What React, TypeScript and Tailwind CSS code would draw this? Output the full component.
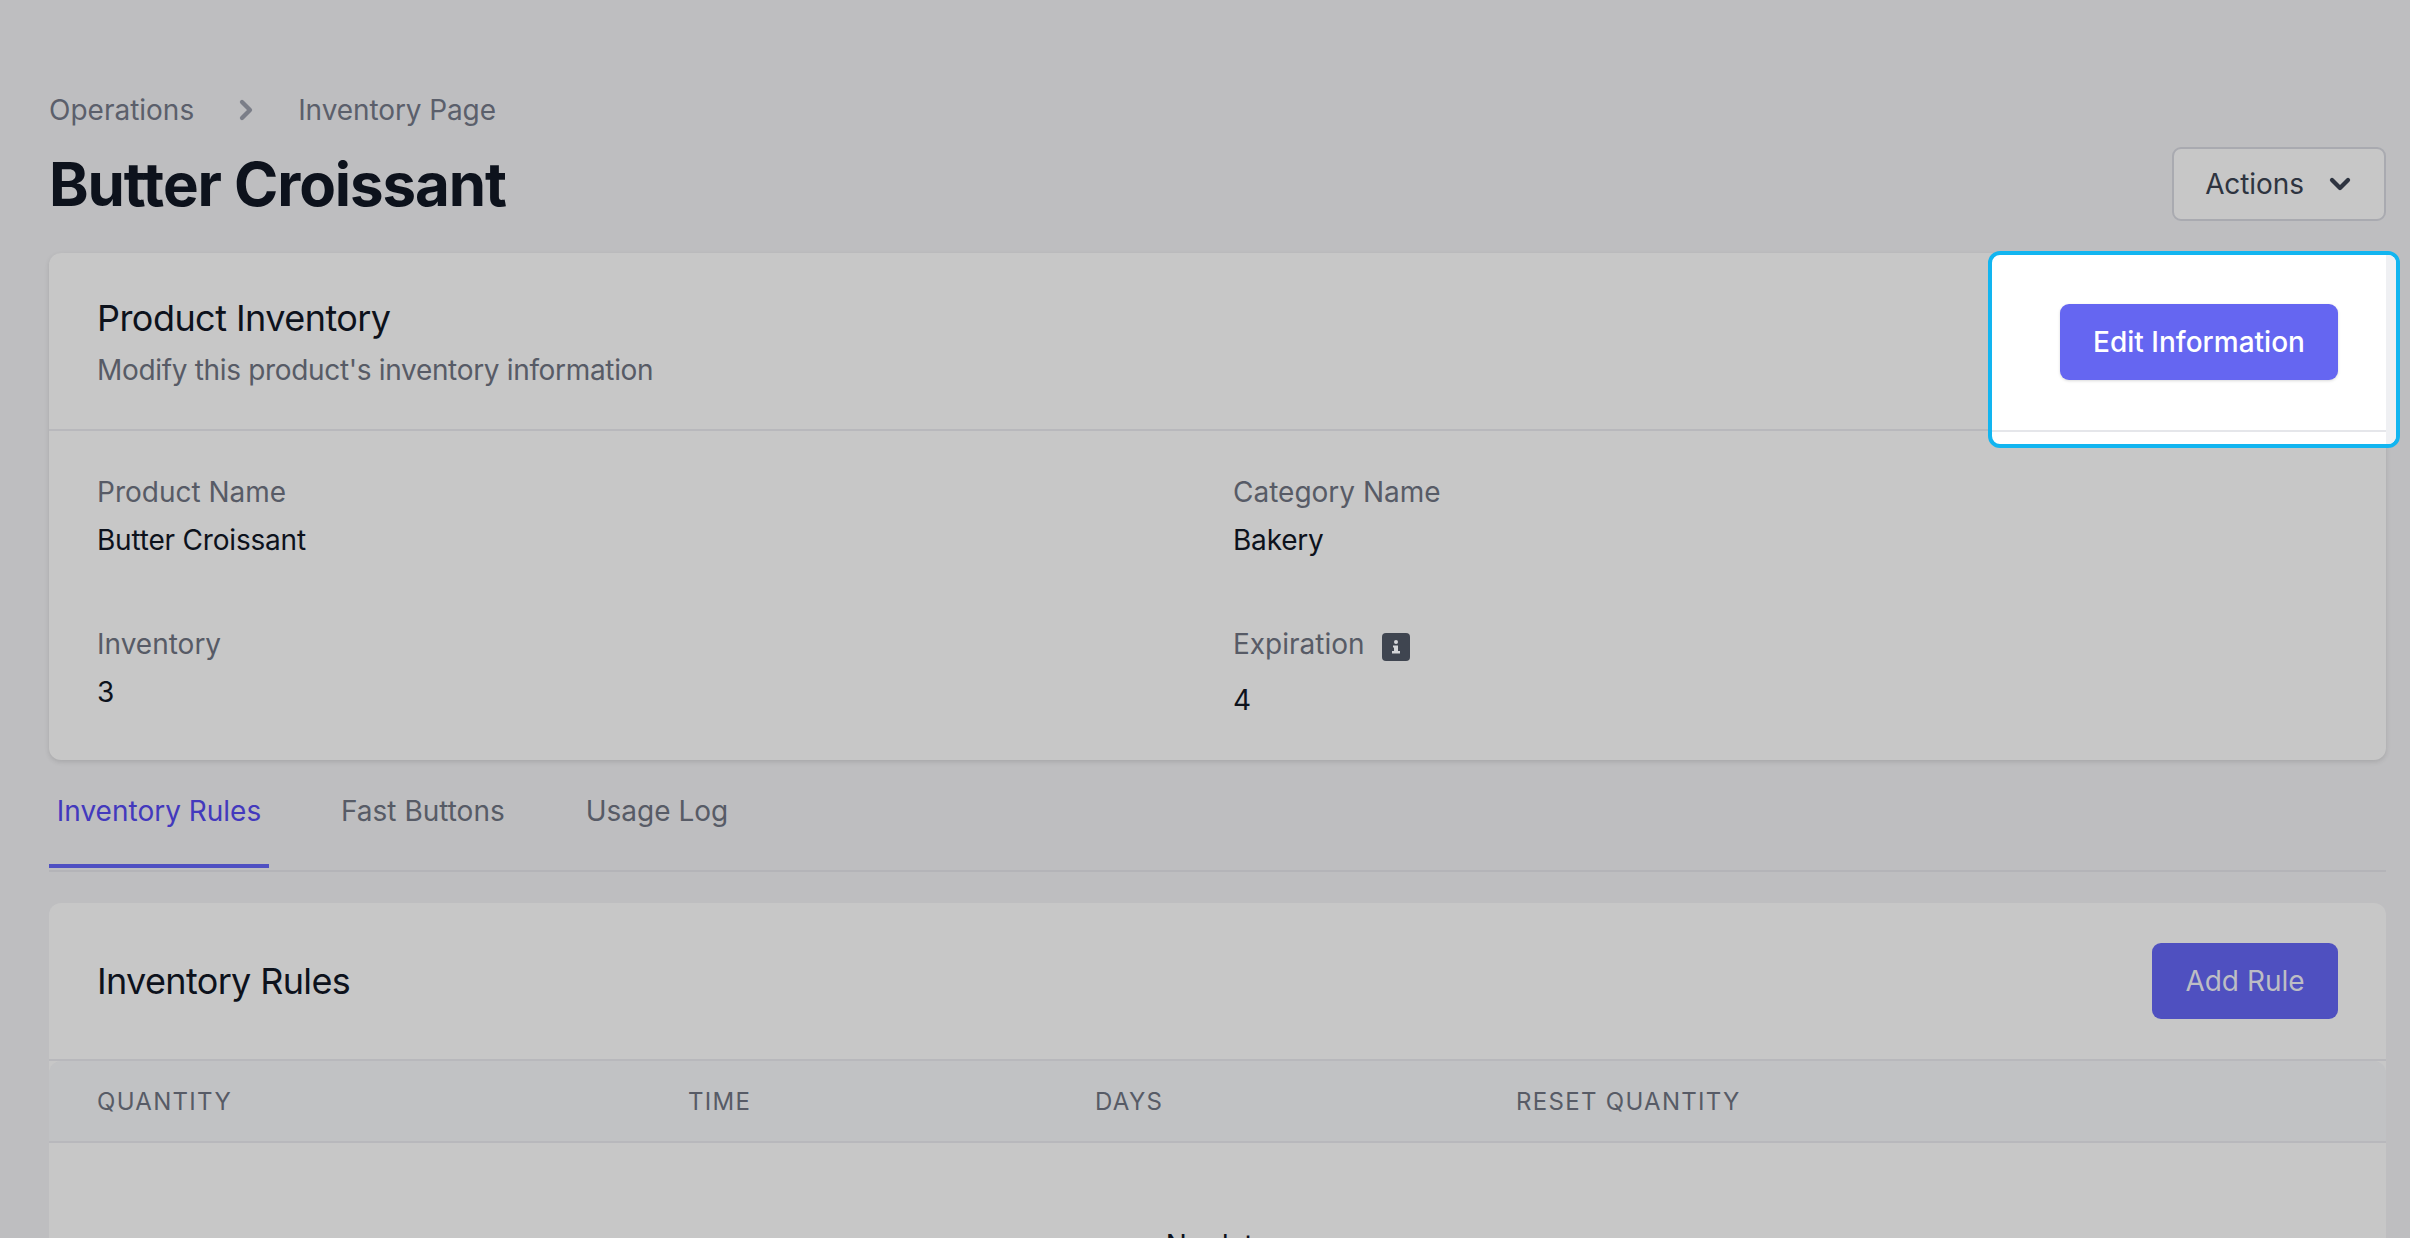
import { ChevronDown, ChevronRight } from "lucide-react";

const columns = [
  { label: "Quantity", width: "w-[591px]" },
  { label: "Time", width: "w-[407px]" },
  { label: "Days", width: "w-[421px]" },
  { label: "Reset Quantity", width: "" },
];

function InfoIcon() {
  return (
    <span className="relative top-[3px] ml-[17px] inline-flex h-[28px] w-[28px] items-center justify-center rounded-[4px] bg-[#3f4550]">
      <svg width="14" height="16" viewBox="0 0 14 16" fill="#d4d5d8">
        <circle cx="7" cy="3" r="2" />
        <path d="M4 6.5h5v5.5h2v2.5H3V12h2V8.5H4z" />
      </svg>
    </span>
  );
}

function Field({ label, value, info }: { label: string; value: string; info?: boolean }) {
  return (
    <div>
      <div className="flex items-center text-[28px] leading-[36px] text-[#575b66]">
        {label}
        {info && <InfoIcon />}
      </div>
      <div className={`${info ? "mt-[20px]" : "mt-[12px]"} text-[28px] leading-[36px] tracking-[-0.2px] text-[#0d121c]`}>{value}</div>
    </div>
  );
}

export default function App() {
  return (
    <div className="relative h-[1238px] overflow-hidden bg-[#bebec0] pl-[49px] pr-[24px] font-['Inter',sans-serif]">
      <div className="flex items-center pt-[90px] text-[28px] leading-[40px] text-[#5b5f6b]">
        <span>Operations</span>
        <ChevronRight className="ml-[36px] mr-[36px] h-[32px] w-[32px] text-[#7b7e88]" strokeWidth={3.2} />
        <span className="tracking-[-0.1px]">Inventory Page</span>
      </div>
      <div className="mt-[17px] flex items-center justify-between">
        <h1 className="text-[60px] font-bold leading-[74px] tracking-[-1.1px] text-[#0d121c]">Butter Croissant</h1>
        <button className="flex h-[74px] w-[214px] items-center justify-center gap-[20px] rounded-[9px] border-[2px] border-[#a9aab0] bg-[#c7c7c7] pl-[3px] text-[28px] tracking-[-0.1px] text-[#2e3440]">
          Actions
          <ChevronDown className="h-[32px] w-[32px]" strokeWidth={3.2} />
        </button>
      </div>

      <div className="relative mt-[32px] h-[507px] rounded-[12px] bg-[#c7c7c7] shadow-[0_2px_5px_rgba(0,0,0,0.12)]">
        <div className="h-[178px] border-b-[2px] border-[#b8b8bc] px-[48px] pt-[41px]">
          <h2 className="text-[36px] leading-[48px] tracking-[-0.55px] text-[#0d121c]">Product Inventory</h2>
          <p className="mt-[8px] text-[28px] leading-[40px] tracking-[-0.33px] text-[#575b66]">Modify this product's inventory information</p>
        </div>
        <div className="grid grid-cols-[1136px_1fr] gap-y-[68px] px-[48px] pt-[43px]">
          <Field label="Product Name" value="Butter Croissant" />
          <Field label="Category Name" value="Bakery" />
          <Field label="Inventory" value="3" />
          <Field label="Expiration" value="4" info />
        </div>

        {/* highlighted spot over the dimmed page */}
        <div className="absolute right-[-14px] top-[-2px] h-[197px] w-[412px] rounded-[12px] border-[4px] border-[#12b5f0] bg-white">
          <div className="absolute inset-y-0 right-0 w-[10px] rounded-r-[8px] bg-[#eff0f3]" />
          <div className="absolute bottom-[12px] left-0 right-[10px] h-[2px] bg-[#e5e6ea]" />
          <button className="absolute left-[68px] top-[49px] h-[76px] w-[278px] rounded-[9px] bg-[#6566f1] text-[28px] font-medium text-white shadow-[0_1px_3px_rgba(0,0,0,0.15)]">
            Edit Information
          </button>
        </div>
      </div>

      <div className="mt-[31px] flex h-[81px] border-b-[2px] border-[#b4b4b8] text-[28px] leading-[40px] text-[#575b66]">
        <div className="flex h-[77px] w-[220px] items-start justify-center border-b-[4px] border-[#4f50c2] text-[#4339bd]">Inventory Rules</div>
        <div className="ml-[72px]">Fast Buttons</div>
        <div className="ml-[81px]">Usage Log</div>
      </div>

      <div className="mt-[31px] rounded-[12px] bg-[#c7c7c7] pb-[200px]">
        <div className="flex h-[158px] items-center justify-between border-b-[2px] border-[#b8b8bc] px-[48px]">
          <h2 className="text-[36px] tracking-[-0.65px] text-[#0d121c]">Inventory Rules</h2>
          <button className="h-[76px] w-[186px] rounded-[9px] bg-[#4f50c0] text-[28px] text-[#bdbdc4]">Add Rule</button>
        </div>
        <div className="flex h-[82px] items-center rounded-t-[12px] border-b-[2px] border-[#b8b8bc] bg-[#c1c2c4] px-[48px] pt-[2px] text-[24px] uppercase tracking-[1.3px] text-[#575b66]">
          {columns.map((c) => (
            <div key={c.label} className={c.width}>{c.label}</div>
          ))}
        </div>
        <div className="pt-[82px] text-center text-[28px] leading-[40px] text-[#0d121c]">No data</div>
      </div>
    </div>
  );
}
